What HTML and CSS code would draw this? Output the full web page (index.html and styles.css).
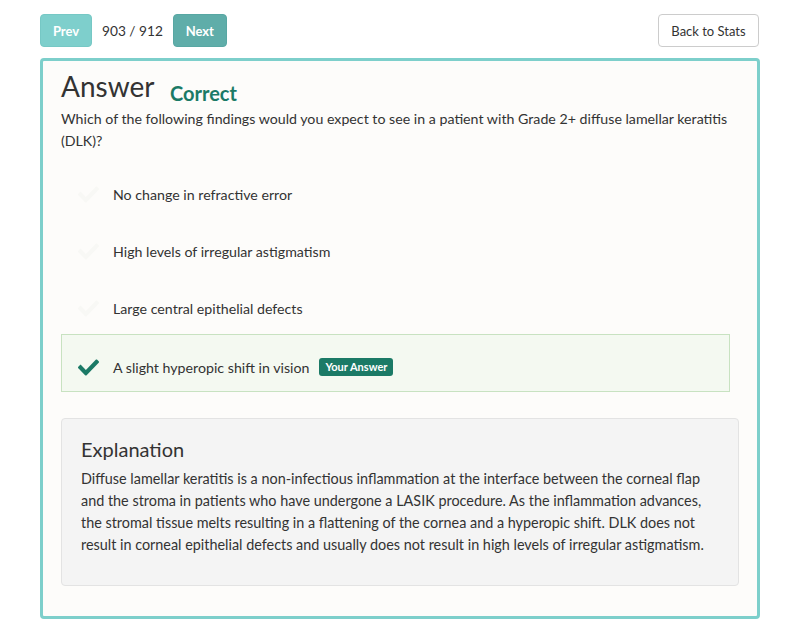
FILE: index.html
```html
<!DOCTYPE html>
<html>
<head>
<meta charset="utf-8">
<link rel="stylesheet" href="styles.css">
</head>
<body>
<div class="page">
  <div class="topbar">
    <div class="nav">
      <button class="btn btn-prev">Prev</button>
      <span class="counter">903 / 912</span>
      <button class="btn btn-next">Next</button>
    </div>
    <button class="btn btn-back">Back to Stats</button>
  </div>
  <div class="card">
    <h1 class="title">Answer <span class="status">Correct</span></h1>
    <p class="question">Which of the following findings would you expect to see in a patient with Grade 2+ diffuse lamellar keratitis (DLK)?</p>
    <ul class="options">
      <li class="option">
        <svg class="check faint" viewBox="0 56 512 400" preserveAspectRatio="none"><path d="M173.898 439.404l-166.4-166.4c-9.997-9.997-9.997-26.206 0-36.204l36.203-36.204c9.997-9.998 26.207-9.998 36.204 0L192 312.69 432.095 72.596c9.997-9.997 26.207-9.997 36.204 0l36.203 36.204c9.997 9.997 9.997 26.206 0 36.204l-294.4 294.401c-9.998 9.997-26.207 9.997-36.204-.001z"/></svg>
        <span>No change in refractive error</span>
      </li>
      <li class="option">
        <svg class="check faint" viewBox="0 56 512 400" preserveAspectRatio="none"><path d="M173.898 439.404l-166.4-166.4c-9.997-9.997-9.997-26.206 0-36.204l36.203-36.204c9.997-9.998 26.207-9.998 36.204 0L192 312.69 432.095 72.596c9.997-9.997 26.207-9.997 36.204 0l36.203 36.204c9.997 9.997 9.997 26.206 0 36.204l-294.4 294.401c-9.998 9.997-26.207 9.997-36.204-.001z"/></svg>
        <span>High levels of irregular astigmatism</span>
      </li>
      <li class="option">
        <svg class="check faint" viewBox="0 56 512 400" preserveAspectRatio="none"><path d="M173.898 439.404l-166.4-166.4c-9.997-9.997-9.997-26.206 0-36.204l36.203-36.204c9.997-9.998 26.207-9.998 36.204 0L192 312.69 432.095 72.596c9.997-9.997 26.207-9.997 36.204 0l36.203 36.204c9.997 9.997 9.997 26.206 0 36.204l-294.4 294.401c-9.998 9.997-26.207 9.997-36.204-.001z"/></svg>
        <span>Large central epithelial defects</span>
      </li>
      <li class="option selected">
        <svg class="check" viewBox="0 56 512 400" preserveAspectRatio="none"><path d="M173.898 439.404l-166.4-166.4c-9.997-9.997-9.997-26.206 0-36.204l36.203-36.204c9.997-9.998 26.207-9.998 36.204 0L192 312.69 432.095 72.596c9.997-9.997 26.207-9.997 36.204 0l36.203 36.204c9.997 9.997 9.997 26.206 0 36.204l-294.4 294.401c-9.998 9.997-26.207 9.997-36.204-.001z"/></svg>
        <span>A slight hyperopic shift in vision</span>
        <span class="badge">Your Answer</span>
      </li>
    </ul>
    <div class="explanation">
      <h2 class="exp-title">Explanation</h2>
      <p class="exp-text">Diffuse lamellar keratitis is a non-infectious inflammation at the interface between the corneal flap and the stroma in patients who have undergone a LASIK procedure. As the inflammation advances, the stromal tissue melts resulting in a flattening of the cornea and a hyperopic shift. DLK does not result in corneal epithelial defects and usually does not result in high levels of irregular astigmatism.</p>
    </div>
  </div>
</div>
</body>
</html>
```
FILE: styles.css
```css
* { box-sizing: border-box; }
body {
  margin: 0;
  background: #ffffff;
  font-family: Lato, "Open Sans", sans-serif;
  color: #333333;
}
.page {
  width: 720px;
  margin: 0 40px;
  padding-top: 14px;
}
.topbar {
  display: flex;
  justify-content: space-between;
  align-items: center;
  height: 33px;
}
.nav {
  display: flex;
  align-items: center;
}
.btn {
  height: 33px;
  border-radius: 4px;
  font-family: inherit;
  cursor: pointer;
  padding: 0;
}
.btn-prev, .btn-next {
  border: 1px solid transparent;
  color: #ffffff;
  font-weight: 700;
  font-size: 13px;
}
.btn-prev {
  width: 52px;
  background: #7ecfcc;
  border-color: #76c8c5;
}
.btn-next {
  width: 54px;
  background: #5fada9;
  border-color: #58a7a3;
}
.counter {
  font-size: 13.7px;
  margin: 0 10px;
  color: #333;
}
.btn-back {
  width: 101px;
  background: #ffffff;
  border: 1px solid #cccccc;
  color: #333;
  font-size: 13px;
  margin-right: 1px;
}
.card {
  margin-top: 11px;
  border: 3px solid #7dcfcb;
  border-radius: 4px;
  background: #fdfcfa;
  padding: 8px 18px 30px 18px;
}
.title {
  margin: 0;
  font-size: 28px;
  font-weight: 400;
  line-height: 34px;
  color: #333;
}
.status {
  font-size: 20px;
  line-height: 20px;
  font-weight: 700;
  color: #1b7a66;
  margin-left: 9px;
  vertical-align: -4px;
}
.question {
  margin: 5px 0 0 0;
  font-size: 14.2px;
  line-height: 22px;
}
.options {
  list-style: none;
  margin: 11px 9px 0 0;
  padding: 0;
}
.option {
  display: flex;
  align-items: center;
  height: 57px;
  padding-left: 16px;
  padding-top: 5px;
  border: 1px solid transparent;
  font-size: 14.2px;
}
.option.selected {
  height: 58px;
  background: #f4f9f1;
  border-color: #c8e2c1;
  padding-top: 8px;
}
.check {
  width: 21px;
  height: 17px;
  fill: #1b7a66;
  margin-right: 14px;
  flex: none;
}
.option .check.faint {
  fill: #f8f8f5;
}
.badge {
  margin-left: 10px;
  background: #1b7a66;
  color: #fff;
  font-size: 11px;
  font-weight: 700;
  padding: 0 6px;
  height: 18px;
  line-height: 18px;
  border-radius: 3px;
}
.explanation {
  margin-top: 26px;
  background: #f4f4f4;
  border: 1px solid #e3e3e3;
  border-radius: 4px;
  padding: 16px 19px 29px 19px;
}
.exp-title {
  margin: 0;
  font-size: 20px;
  font-weight: 400;
  line-height: 28px;
}
.exp-text {
  margin: 5px 0 0 0;
  font-size: 14.4px;
  line-height: 22px;
}
```
